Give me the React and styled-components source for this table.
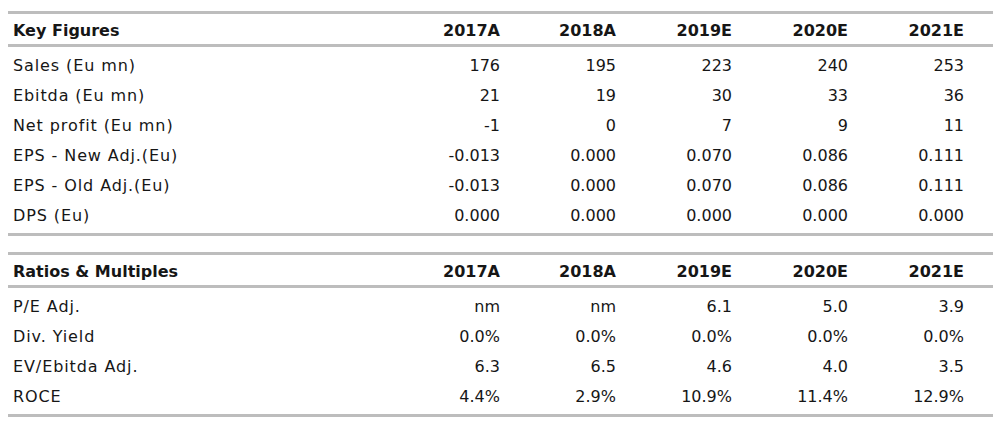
import React from 'react';
import styled, { createGlobalStyle } from 'styled-components';

const GlobalStyle = createGlobalStyle`
  html, body { margin: 0; padding: 0; background: #fff; }
  body { font-family: "DejaVu Sans", "Liberation Sans", sans-serif; color: #161616; }
`;

const Page = styled.div`
  padding: 11px 11px 0 8px;
  display: flex;
  flex-direction: column;
  gap: 16px;
`;

const Table = styled.div`
  display: flex;
  flex-direction: column;
  border-top: 3px solid #bdbdbd;
  border-bottom: 3px solid #bdbdbd;
`;

const Row = styled.div`
  display: grid;
  grid-template-columns: 371px repeat(5, 116px);
  padding: 0 29px 0 5px;
  height: 30px;
  align-items: center;
  font-size: 16px;
  ${p => p.head && `
    font-weight: bold;
    padding-top: 2px;
    height: 28px;
    border-bottom: 3px solid #bdbdbd;
  `}
`;

const Body = styled.div`
  padding: 3px 0;
`;

const Label = styled.div`
  white-space: nowrap;
  letter-spacing: ${p => (p.head ? '0' : '0.9px')};
`;

const Cell = styled.div`
  text-align: right;
  white-space: nowrap;
`;

const keyFigures = [
  ['Sales (Eu mn)', '176', '195', '223', '240', '253'],
  ['Ebitda (Eu mn)', '21', '19', '30', '33', '36'],
  ['Net profit (Eu mn)', '-1', '0', '7', '9', '11'],
  ['EPS - New Adj.(Eu)', '-0.013', '0.000', '0.070', '0.086', '0.111'],
  ['EPS - Old Adj.(Eu)', '-0.013', '0.000', '0.070', '0.086', '0.111'],
  ['DPS (Eu)', '0.000', '0.000', '0.000', '0.000', '0.000'],
];

const ratios = [
  ['P/E Adj.', 'nm', 'nm', '6.1', '5.0', '3.9'],
  ['Div. Yield', '0.0%', '0.0%', '0.0%', '0.0%', '0.0%'],
  ['EV/Ebitda Adj.', '6.3', '6.5', '4.6', '4.0', '3.5'],
  ['ROCE', '4.4%', '2.9%', '10.9%', '11.4%', '12.9%'],
];

const years = ['2017A', '2018A', '2019E', '2020E', '2021E'];

const FigureTable = ({ title, rows }) => (
  <Table>
    <Row head>
      <Label head>{title}</Label>
      {years.map(y => <Cell key={y}>{y}</Cell>)}
    </Row>
    <Body>
      {rows.map(([label, ...vals]) => (
        <Row key={label}>
          <Label>{label}</Label>
          {vals.map((v, i) => <Cell key={i}>{v}</Cell>)}
        </Row>
      ))}
    </Body>
  </Table>
);

export default function App() {
  return (
    <>
      <GlobalStyle />
      <Page>
        <FigureTable title="Key Figures" rows={keyFigures} />
        <FigureTable title="Ratios & Multiples" rows={ratios} />
      </Page>
    </>
  );
}
